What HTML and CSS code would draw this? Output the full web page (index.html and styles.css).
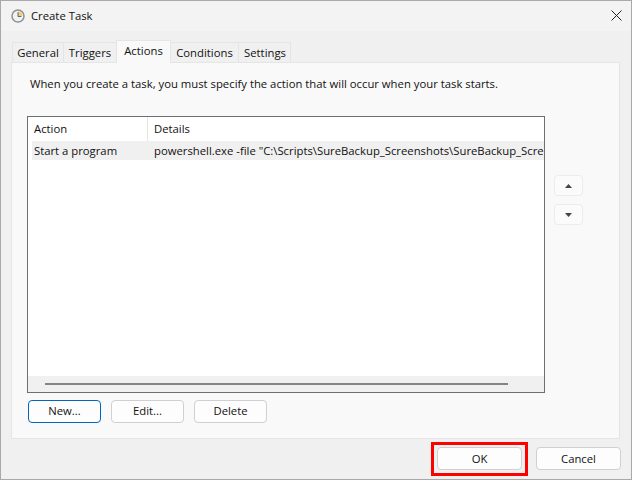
FILE: index.html
```html
<!DOCTYPE html>
<html>
<head>
    <title>Create Task</title>
    <link rel="stylesheet" href="styles.css">
</head>
<body>
    <div class="window">
        <div class="titlebar">
            <svg class="app-icon" width="14" height="14" viewBox="0 0 14 14">
                <circle cx="7" cy="7" r="6" fill="#f2f2ee" stroke="#8a9296" stroke-width="1.5"/>
                <path d="M7 7 V2.4 A4.6 4.6 0 0 1 11.6 7 Z" fill="#eccb7a"/>
                <path d="M7 3.2 V7.5 H10.4" fill="none" stroke="#5f6468" stroke-width="1"/>
            </svg>
            <span class="title">Create Task</span>
            <svg class="close-icon" width="11" height="11" viewBox="0 0 11 11">
                <path d="M0.5 0.5 L10.5 10.5 M10.5 0.5 L0.5 10.5" stroke="#222" stroke-width="1" fill="none"/>
            </svg>
        </div>

        <div class="content">
            <div class="tabs">
                <div class="tab tab-general">General</div>
                <div class="tab tab-triggers">Triggers</div>
                <div class="tab tab-actions active">Actions</div>
                <div class="tab tab-conditions">Conditions</div>
                <div class="tab tab-settings">Settings</div>
            </div>

            <div class="panel">
                <p class="intro">When you create a task, you must specify the action that will occur when your task starts.</p>

                <div class="list-row">
                    <div class="list">
                        <div class="list-header">
                            <div class="col-action">Action</div>
                            <div class="col-details">Details</div>
                        </div>
                        <div class="list-item">
                            <div class="col-action">Start a program</div>
                            <div class="col-details">powershell.exe -file "C:\Scripts\SureBackup_Screenshots\SureBackup_Scre</div>
                        </div>
                        <div class="list-body"></div>
                        <div class="scrollbar"><div class="scroll-thumb"></div></div>
                    </div>
                    <div class="move-buttons">
                        <button class="move-btn">
                            <svg width="7" height="4" viewBox="0 0 7 4"><path d="M3.5 0 L7 4 H0 Z" fill="#444"/></svg>
                        </button>
                        <button class="move-btn">
                            <svg width="7" height="4" viewBox="0 0 7 4"><path d="M0 0 H7 L3.5 4 Z" fill="#444"/></svg>
                        </button>
                    </div>
                </div>

                <div class="list-actions">
                    <button class="btn focused">New...</button>
                    <button class="btn">Edit...</button>
                    <button class="btn">Delete</button>
                </div>
            </div>

            <div class="footer">
                <div class="ok-wrap">
                    <button class="btn btn-large">OK</button>
                    <div class="highlight"></div>
                </div>
                <button class="btn btn-large">Cancel</button>
            </div>
        </div>
    </div>
</body>
</html>
```

FILE: styles.css
```css
* {
    margin: 0;
    padding: 0;
    box-sizing: border-box;
}

html, body {
    width: 632px;
    height: 480px;
    overflow: hidden;
}

body {
    font-family: "Open Sans", "Noto Sans", Arial, sans-serif;
    font-size: 11.3px;
    color: #111;
    background-color: #f0f0f0;
}

.window {
    width: 632px;
    height: 480px;
    border: 1px solid #a9a9a9;
    background-color: #f0f0f0;
    display: flex;
    flex-direction: column;
}

.titlebar {
    height: 30px;
    flex-shrink: 0;
    background-color: #f3f3f3;
    display: flex;
    align-items: center;
    padding: 0 9px 2px 10px;
}

.app-icon {
    margin: 2px 6px 0 0;
}

.title {
    flex: 1;
}

.content {
    flex: 1;
    padding: 9px 10px 0;
    display: flex;
    flex-direction: column;
}

/* Tabs */
.tabs {
    display: flex;
    align-items: flex-end;
    height: 22px;
    padding-left: 1px;
    position: relative;
    z-index: 1;
}

.tab {
    height: 20px;
    line-height: 19px;
    text-align: center;
    background-color: #f0f0f0;
    border: 1px solid #e5e5e5;
    border-bottom: none;
    margin-right: -1px;
}

.tab-general { width: 52px; }
.tab-triggers { width: 54px; }
.tab-actions { width: 55px; }
.tab-conditions { width: 69px; }
.tab-settings { width: 53px; padding-left: 1px; }

.tab.active {
    height: 23px;
    line-height: 19px;
    margin-bottom: -1px;
    background-color: #f9f9f9;
    position: relative;
}

/* Main panel */
.panel {
    width: 609px;
    height: 377px;
    background-color: #f9f9f9;
    border: 1px solid #e5e5e5;
    padding: 13px 15px 0;
}

.intro {
    line-height: 16px;
    margin-left: 3px;
    white-space: nowrap;
}

.list-row {
    display: flex;
    margin-top: 24px;
}

.list {
    width: 518px;
    height: 277px;
    background-color: white;
    border: 1px solid #6e6e6e;
    display: flex;
    flex-direction: column;
    overflow: hidden;
}

.list-header {
    display: flex;
    height: 24px;
    line-height: 23px;
}

.list-header .col-action {
    padding-left: 6px;
}

.list-header .col-details {
    border-left: 1px solid #e5e5e5;
}

.list-item {
    display: flex;
    height: 19px;
    line-height: 19px;
    margin-left: 4px;
    background-color: #f0f0f0;
    white-space: nowrap;
    overflow: hidden;
}

.col-action {
    width: 119px;
    padding-left: 5px;
    flex-shrink: 0;
}

.list-item .col-action {
    width: 115px;
    padding-left: 2px;
}

.col-details {
    flex: 1;
    padding-left: 6px;
    white-space: nowrap;
}

.list-item .col-details {
    padding-left: 7px;
}

.list-body {
    flex: 1;
}

.scrollbar {
    height: 16px;
    background-color: #f0f0f0;
    padding: 7px 36px 0 17px;
}

.scroll-thumb {
    height: 2px;
    background-color: #858585;
}

.move-buttons {
    display: flex;
    flex-direction: column;
    gap: 8px;
    margin: 59px 0 0 9px;
}

.move-btn {
    width: 29px;
    height: 21px;
    background-color: #fbfbfb;
    border: 1px solid #ececec;
    border-radius: 4px;
    display: flex;
    align-items: center;
    justify-content: center;
}

/* Buttons */
.list-actions {
    display: flex;
    gap: 10px;
    margin: 7px 0 0 1px;
}

.btn {
    width: 73px;
    height: 23px;
    padding-bottom: 2px;
    font-family: inherit;
    font-size: 11.3px;
    color: #111;
    background-color: #fdfdfd;
    border: 1px solid #d0d0d0;
    border-radius: 4px;
}

.btn.focused {
    border-color: #0067c0;
}

.btn-large {
    width: 85px;
    padding-bottom: 0;
}

.footer {
    display: flex;
    justify-content: flex-end;
    gap: 14px;
    margin-top: 8px;
}

.ok-wrap {
    position: relative;
    display: flex;
}

.highlight {
    position: absolute;
    left: -6px;
    top: -5px;
    width: 97px;
    height: 34px;
    border: 3px solid #f00;
}
```
